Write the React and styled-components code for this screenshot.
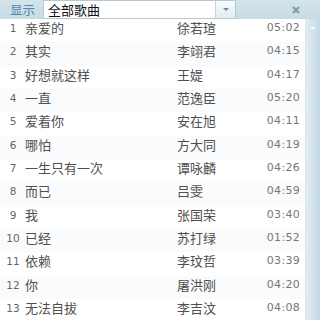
import styled, { createGlobalStyle } from "styled-components";

const Global = createGlobalStyle`
  html, body { margin: 0; padding: 0; }
  body {
    width: 320px;
    height: 320px;
    overflow: hidden;
    background: #ffffff;
    font-family: "Noto Sans CJK SC", "Noto Sans", sans-serif;
  }
`;

const Panel = styled.div`
  width: 320px;
  height: 320px;
  display: flex;
  flex-direction: column;
  background: #cddfe6;
`;

const Toolbar = styled.div`
  height: 24px;
  display: flex;
  align-items: center;
  padding-left: 10px;
  gap: 8px;
  background: linear-gradient(#d3e4ea, #c7dbe3);
`;

const Label = styled.span`
  font-size: 12.5px;
  color: #4d86b0;
  line-height: 14px;
`;

const Combo = styled.div`
  width: 193px;
  height: 19px;
  display: flex;
  align-items: stretch;
  background: #fff;
  border: 1px solid #b7c9d2;
  box-sizing: border-box;
`;

const ComboText = styled.span`
  flex: 1;
  padding-left: 4px;
  font-size: 13px;
  line-height: 17px;
  color: #111;
`;

const ComboButton = styled.span`
  width: 19px;
  display: flex;
  align-items: center;
  justify-content: center;
  border-left: 1px solid #c7d6dd;
  background: linear-gradient(#f7fafb, #e3ecf0);
  &::after {
    content: "";
    border-left: 3px solid transparent;
    border-right: 3px solid transparent;
    border-top: 3px solid #6f8a98;
  }
`;

const Close = styled.svg`
  margin-left: auto;
  margin-right: 20px;
  width: 8px;
  height: 8px;
`;

const Body = styled.div`
  flex: 1;
  display: flex;
`;

const List = styled.div`
  width: 305px;
  background: #ffffff;
  display: flex;
  flex-direction: column;
`;

const Row = styled.div`
  height: 23.33px;
  display: flex;
  align-items: flex-start;
  padding-top: 2px;
  box-sizing: border-box;
  background: ${(p) => (p.$alt ? "#fafbfc" : "#ffffff")};
  font-size: 13px;
  line-height: 14px;
  color: #505050;
`;

const Num = styled.span`
  width: 25px;
  padding-left: 1px;
  box-sizing: border-box;
  text-align: center;
  font-family: "DejaVu Sans", sans-serif;
  font-size: 10.5px;
  color: #666;
`;

const Title = styled.span`
  width: 152px;
`;

const Artist = styled.span`
  width: 88px;
`;

const Time = styled.span`
  width: 35px;
  text-align: right;
  font-family: "DejaVu Sans", sans-serif;
  font-size: 11px;
  color: #777;
  letter-spacing: 0.3px;
`;

const Scroll = styled.div`
  flex: 1;
  display: flex;
  flex-direction: column;
  align-items: center;
  padding-top: 7px;
  border-left: 1px solid #dbe6eb;
  background: linear-gradient(90deg, #e2edf1, #c3d8e1);
  &::before {
    content: "";
    border-left: 3px solid transparent;
    border-right: 3px solid transparent;
    border-bottom: 3px solid #f7fafb;
  }
`;

const songs = [
  ["亲爱的", "徐若瑄", "05:02"],
  ["其实", "李翊君", "04:15"],
  ["好想就这样", "王媞", "04:17"],
  ["一直", "范逸臣", "05:20"],
  ["爱着你", "安在旭", "04:11"],
  ["哪怕", "方大同", "04:19"],
  ["一生只有一次", "谭咏麟", "04:26"],
  ["而已", "吕雯", "04:59"],
  ["我", "张国荣", "03:40"],
  ["已经", "苏打绿", "01:52"],
  ["依赖", "李玟哲", "03:39"],
  ["你", "屠洪刚", "04:20"],
  ["无法自拔", "李吉汶", "04:08"],
];

export default function App() {
  return (
    <>
      <Global />
      <Panel>
        <Toolbar>
          <Label>显示</Label>
          <Combo>
            <ComboText>全部歌曲</ComboText>
            <ComboButton />
          </Combo>
          <Close viewBox="0 0 8 8">
            <path d="M1 1 L7 7 M7 1 L1 7" stroke="#7a9dab" strokeWidth="2" />
          </Close>
        </Toolbar>
        <Body>
          <List>
            {songs.map(([t, a, d], i) => (
              <Row key={i} $alt={i % 2 === 1}>
                <Num>{i + 1}</Num>
                <Title>{t}</Title>
                <Artist>{a}</Artist>
                <Time>{d}</Time>
              </Row>
            ))}
          </List>
          <Scroll />
        </Body>
      </Panel>
    </>
  );
}
